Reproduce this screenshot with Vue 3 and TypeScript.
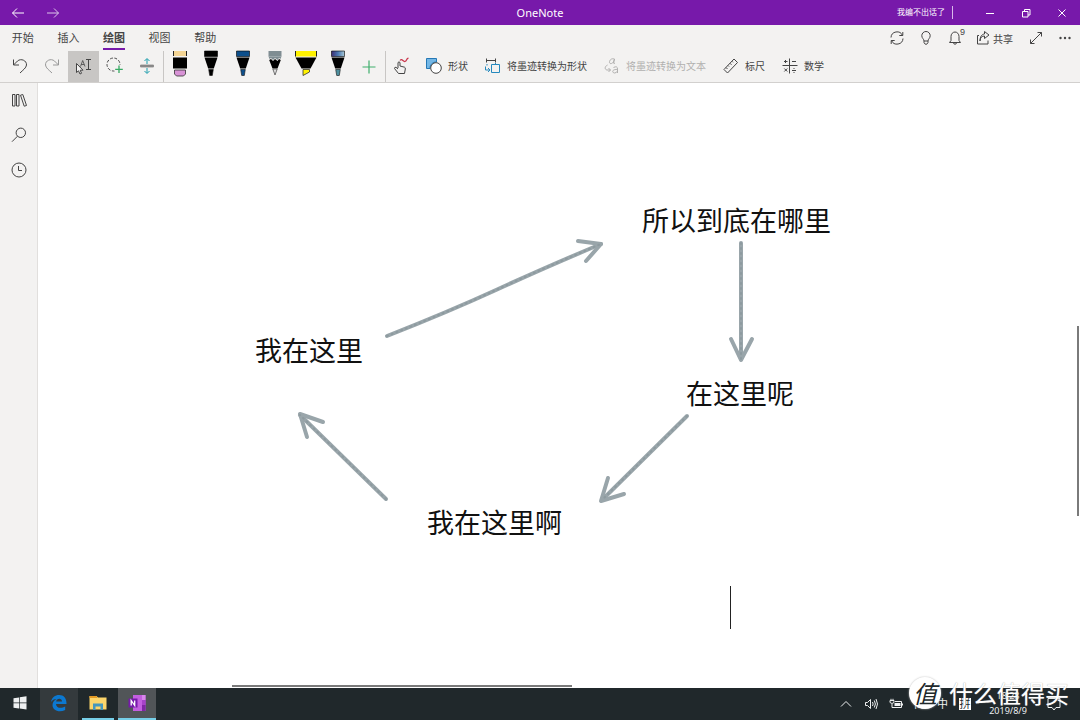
<script setup lang="ts">
interface Pen { name: string; cap: string; kind: 'pen' | 'pencil' | 'marker' | 'eraser'; tip: string }
interface Note { text: string; x: number; y: number }
interface Arrow { shaft: string; head: string }

const tabs: string[] = ['开始', '插入', '绘图', '视图', '帮助']
const activeTab = '绘图'

const pens: Pen[] = [
  { name: '橡皮擦', cap: '#f3d493', kind: 'eraser', tip: '#d893d6' },
  { name: '黑色笔', cap: '#000', kind: 'pen', tip: '#000' },
  { name: '蓝色笔', cap: '#0d4f8b', kind: 'pen', tip: '#0d4f8b' },
  { name: '铅笔', cap: '#7f8d92', kind: 'pencil', tip: '#7f8d92' },
  { name: '荧光笔', cap: '#fff200', kind: 'marker', tip: '#fff200' },
  { name: '星系笔', cap: 'url(#galaxy)', kind: 'pen', tip: '#4d8f9e' },
]

const notes: Note[] = [
  { text: '所以到底在哪里', x: 604, y: 117 },
  { text: '我在这里', x: 217, y: 247 },
  { text: '在这里呢', x: 648, y: 290 },
  { text: '我在这里啊', x: 389, y: 419 },
]

const arrows: Arrow[] = [
  { shaft: 'M349 253 Q410 229 458 207 T563 161', head: 'M540 158 L563 161 L548 178' },
  { shaft: 'M703 160 L703 276', head: 'M693 256 L703 277 L714 256' },
  { shaft: 'M649 333 L564 417', head: 'M570 395 L563 418 L586 411' },
  { shaft: 'M348 416 L262 332', head: 'M285 339 L262 331 L269 354' },
]
</script>

<template>
  <div class="app">
    <header class="titlebar">
      <div class="side">
        <button class="tb" aria-label="后退"><svg width="14" height="12" viewBox="0 0 14 12"><path d="M13 6H1.5M6 1.5L1.5 6L6 10.5" /></svg></button>
        <button class="tb dim" aria-label="前进"><svg width="14" height="12" viewBox="0 0 14 12"><path d="M1 6H12.5M8 1.5L12.5 6L8 10.5" /></svg></button>
      </div>
      <h1>OneNote</h1>
      <div class="side right">
        <span class="user">我编不出话了</span>
        <button class="tb win" aria-label="最小化"><svg width="10" height="10" viewBox="0 0 10 10"><path d="M1 5.5H9" /></svg></button>
        <button class="tb win" aria-label="还原"><svg width="10" height="10" viewBox="0 0 10 10"><path d="M1.5 3.5H7V9H1.5ZM3.5 3.5V1.5H9V7H7" /></svg></button>
        <button class="tb win" aria-label="关闭"><svg width="10" height="10" viewBox="0 0 10 10"><path d="M1.5 1.5L8.5 8.5M8.5 1.5L1.5 8.5" /></svg></button>
      </div>
    </header>

    <section class="ribbon">
      <div class="tabrow">
        <nav class="tabs">
          <button v-for="t in tabs" :key="t" class="tab" :class="{ active: t === activeTab }"><span>{{ t }}</span></button>
        </nav>
        <div class="status">
          <button aria-label="同步"><svg width="16" height="16" viewBox="0 0 16 16"><path d="M2 7.500A6 6 0 0 1 13.500 5.500M14 8.500A6 6 0 0 1 2.500 10.500M13.800 2V5.500H10.300M2.200 14V10.500H5.700" /></svg></button>
          <button aria-label="提示"><svg width="16" height="16" viewBox="0 0 16 16"><path d="M6 11C6 9 3.800 8.300 3.800 5.700A4.200 4.200 0 0 1 12.200 5.700C12.200 8.300 10 9 10 11ZM6 11V12.500L7.200 14.200H8.800L10 12.500V11" /></svg></button>
          <button class="bell" aria-label="通知"><svg width="16" height="16" viewBox="0 0 16 16"><path d="M2.500 12.500H13.500L12 10.500V6.500A4 4.500 0 0 0 4 6.500V10.500ZM6.500 12.700A1.500 1.500 0 0 0 9.500 12.700" /></svg><span class="badge">9</span></button>
          <button class="share"><svg width="14" height="16" viewBox="0 0 14 16"><path d="M3 5.500H1.500V14H12V10.500M4 11C4.200 7.500 6 6 8.500 6V8.500L13 5L8.500 1.500V4C5.500 4.300 4 7 4 11Z" /></svg>共享</button>
          <button aria-label="全屏"><svg width="16" height="16" viewBox="0 0 16 16"><path d="M2.500 13.500L13.500 2.500M9.500 2.500H13.500V6.500M2.500 9.500V13.500H6.500" /></svg></button>
          <button aria-label="更多"><svg width="16" height="16" viewBox="0 0 16 16"><g class="solid"><circle cx="3.500" cy="8" r="1.200" /><circle cx="8" cy="8" r="1.200" /><circle cx="12.500" cy="8" r="1.200" /></g></svg></button>
        </div>
      </div>

      <div class="tools">
        <div class="group edit">
          <button aria-label="撤消"><svg width="18" height="18" viewBox="0 0 18 18"><path d="M2.500 2.500V8H8M2.500 8L6.500 4C10 1 15.800 3.500 15.500 8C15.200 11 12 13 9 16" /></svg></button>
          <button class="faint" aria-label="恢复"><svg width="18" height="18" viewBox="0 0 18 18"><path d="M15.500 2.500V8H10M15.500 8L11.500 4C8 1 2.200 3.500 2.500 8C2.800 11 6 13 9 16" /></svg></button>
          <button class="selected" aria-label="选择对象或键入文本"><svg width="20" height="20" viewBox="0 0 20 20"><path d="M13 2.500H18M15.500 2.500V12.500M13 12.500H18" /><path d="M7.500 9.500L9.700 3.500L12 9.500M8.300 7.500H11.200" stroke-width=".8" /><path d="M3.500 6.500V15.500L5.500 13.800L7 17L8.500 16.300L7.200 13.200H10Z" fill="#f3f2f1" /></svg></button>
          <button aria-label="套索选择"><svg width="20" height="20" viewBox="0 0 20 20"><circle cx="8.500" cy="8.500" r="6.500" stroke-dasharray="2.800 1.600" /><path d="M14 9V17M9.500 13H18" stroke="#f3f2f1" stroke-width="4" /><path d="M14 9.500V17M10.200 13.300H17.800" stroke="#36aa63" stroke-width="1.300" /></svg></button>
          <button aria-label="插入空间"><svg width="18" height="18" viewBox="0 0 18 18"><path d="M2.500 8H15.500V10H2.500Z" fill="#888" stroke="#888" stroke-width=".8" /><path d="M9 7V2M6.500 4L9 1.500L11.500 4M9 11V16M6.500 14L9 16.500L11.500 14" stroke="#1a9dac" /></svg></button>
        </div>
        <div class="group pens">
          <button v-for="p in pens" :key="p.name" :aria-label="p.name">
            <svg width="24" height="28" viewBox="0 0 24 28" class="pen">
              <defs><linearGradient id="galaxy"><stop offset="0" stop-color="#3c2c72" /><stop offset=".5" stop-color="#4a78b3" /><stop offset="1" stop-color="#a7c7d4" /></linearGradient></defs>
              <template v-if="p.kind === 'eraser'">
                <path d="M5.500 1H18.500V6H5.500Z" :fill="p.cap" /><path d="M5.500 1V6M18.500 1V6" stroke="#222" /><path d="M5 7.500H19V18.500H5Z" fill="#000" />
                <path d="M6.500 20H17.500V24L15.500 26H8.500L6.500 24Z" :fill="p.tip" stroke="#333" stroke-width=".8" />
              </template>
              <template v-else-if="p.kind === 'marker'">
                <path d="M1 1H23V6.500H1Z" :fill="p.cap" /><path d="M1.500 1V6.500M22.500 1V6.500" stroke="#222" />
                <path d="M1.500 7.500H22.500L16.500 18.500H7.500Z" fill="#000" /><path d="M9 19.500H15.500V22L9 25.500Z" :fill="p.tip" stroke="#333" stroke-width=".8" />
              </template>
              <template v-else>
                <path d="M5.500 1H18.500V6.500H5.500Z" :fill="p.cap" :stroke="p.kind === 'pencil' ? 'none' : '#000'" stroke-width=".6" />
                <path v-if="p.kind === 'pencil'" d="M5.500 6.500H18.500L17.500 9L16 8L14.500 10L12 8L10 10L8 8L6.500 9Z" :fill="p.cap" />
                <path v-if="p.kind === 'pencil'" d="M6.200 10L8 9L10 11L12 9L14.500 11L16 9L17.800 10L14.500 18.500H9.500Z" fill="#000" />
                <path v-else d="M5.500 7.500H18.500L14.800 18.500H9.200Z" fill="#000" />
                <path v-if="p.kind === 'pencil'" d="M9.800 19L12 25L14.200 19Z" fill="#ddd" stroke="#555" stroke-width=".8" />
                <path v-else d="M9.700 19.500H14.300L13.300 25.500H10.700Z" :fill="p.tip" stroke="#111" stroke-width=".6" />
              </template>
            </svg>
          </button>
          <button aria-label="添加笔"><svg width="16" height="16" viewBox="0 0 16 16"><path d="M8 1.500V14.500M1.500 8H14.500" stroke="#3fae6c" stroke-width="1.200" /></svg></button>
        </div>
        <div class="group commands">
          <button class="touch" aria-label="用鼠标或触摸绘图"><svg width="18" height="18" viewBox="0 0 18 18"><path d="M6 11V5.500Q7 4.200 8 5.500V9L12.500 10.200Q13.500 10.500 13.300 12L12.500 16.500H6.500L2.500 11.500Q2.500 10 4 10.300L6 12" /><path d="M8 3.500C10 1 11 5 13 4.500C15 4 14 1.500 16.500 1.200" stroke="#c9374c" stroke-width="1.200" /></svg></button>
          <button><svg width="18" height="18" viewBox="0 0 18 18"><path d="M1.500 1.500H11.500V5A6 6 0 0 0 5 11.500H1.500Z" fill="#73b7e6" stroke="#2578b5" /><circle cx="11" cy="11" r="5.300" fill="#fff" /></svg><span>形状</span></button>
          <button><svg width="18" height="18" viewBox="0 0 18 18"><path d="M2 3.500H12M2.500 1.500V5.500M11.500 1.500V5.500" /><path d="M3 7V8.500M11.500 6V7" stroke="#2689bd" /><path d="M7.500 7.500H15.500V15.500H7.500Z" stroke="#2689bd" /><path d="M1.500 9.500V13H6M4 11L6 13L4 15" stroke="#2689bd" /></svg><span>将墨迹转换为形状</span></button>
          <button disabled><svg width="18" height="18" viewBox="0 0 18 18"><path d="M11.500 2C8.500 1 6.500 3 6.500 5.200C6.500 7.200 9 7 10.500 5L11.500 2L10.500 6Q10.500 7 12 6" /><path d="M4.500 8C1.500 9.500 1.500 12.500 4 13H7.500M5.500 11L7.500 13L5.500 15M10.500 10.500Q14.500 8.500 14.500 12V16M14.500 12.500C8.500 12 9 16 11.500 16Q13.500 16 14.500 14" /></svg><span>将墨迹转换为文本</span></button>
          <button><svg width="18" height="18" viewBox="0 0 18 18"><path d="M2 12.500L12 2L15.500 5.500L5.500 16ZM4 10.500L5.500 12M6 8.500L7 9.500M8 6.300L9.500 7.800M10 4.300L11 5.300" /></svg><span>标尺</span></button>
          <button><svg width="18" height="18" viewBox="0 0 18 18"><path d="M8.500 1.500V16.500M1.500 8.500H16.500M3 4.500H6.500M4.500 3V6M11 4.500H15M3.300 11.500L6.300 14.500M6.300 11.500L3.300 14.500M11 13.500H15M13 11V12M13 15V16" /></svg><span>数学</span></button>
        </div>
      </div>
    </section>

    <div class="workspace">
      <aside class="rail">
        <button aria-label="显示导航"><svg width="18" height="18" viewBox="0 0 18 18"><path d="M2.500 3.500H5V15H2.500ZM6.500 3.500H9V15H6.500ZM10.500 4.200L12.800 3.500L16.500 14.500L14.200 15.200Z" /></svg></button>
        <button aria-label="搜索"><svg width="18" height="18" viewBox="0 0 18 18"><circle cx="10.800" cy="6.800" r="4.700" /><path d="M7.500 10.200L2 15.700" /></svg></button>
        <button aria-label="最近的笔记"><svg width="18" height="18" viewBox="0 0 18 18"><circle cx="9" cy="9" r="7" /><path d="M8.500 5V9.500H12" /></svg></button>
      </aside>
      <main class="canvas">
        <svg class="ink" width="1042" height="605" viewBox="0 0 1042 605">
          <g v-for="a in arrows" :key="a.shaft"><path :d="a.shaft" /><path :d="a.head" /></g>
          <g class="grain"><path v-for="a in arrows" :key="a.shaft" :d="a.shaft" /></g>
        </svg>
        <p v-for="n in notes" :key="n.text" class="note" :style="{ left: n.x + 'px', top: n.y + 'px' }">{{ n.text }}</p>
        <i class="caret"></i>
        <i class="hscroll"></i>
        <i class="vscroll"></i>
      </main>
    </div>

    <footer class="taskbar">
      <button class="task start" aria-label="开始菜单"><svg width="14" height="14" viewBox="0 0 14 14"><path class="fillw" d="M.5 2.200L6 1.400V6.600H.5ZM6.700 1.300L13.500.3V6.600H6.700ZM.5 7.300H6V12.500L.5 11.700ZM6.700 7.300H13.500V13.600L6.700 12.600Z" /></svg></button>
      <button class="task edge" aria-label="Edge"><svg width="18" height="18" viewBox="0 0 18 18"><path d="M1 8C1.800 3.500 5 1 9.200 1C14 1 16.700 4.500 16.500 10H6C6.300 14.500 11.500 14.700 15.200 12.500V16C9 19 2.500 16.500 2.500 11C2.500 8 4.500 6 6.500 5C4 5 2.300 6.300 1 8ZM6.200 7.400H12C12 3.700 6.500 3.800 6.200 7.400Z" fill="#0c78d0" stroke="none" fill-rule="evenodd" /></svg></button>
      <button class="task open files" aria-label="文件资源管理器"><svg width="18" height="16" viewBox="0 0 18 16"><path d="M.5 1H7.500L9 2.500H17.500V14.500H.5Z" fill="#fbd56b" stroke="none" /><path d="M.5 1H7.500L8.500 3H.5Z" fill="#e39a24" stroke="none" /><path d="M4 15V8.500H14V15H11.500V11.500H6.500V15Z" fill="#4597bd" stroke="none" /></svg></button>
      <button class="task open current" aria-label="OneNote"><svg width="18" height="18" viewBox="0 0 18 18"><path d="M5 1H17.500V17H5Z" fill="#c35fe0" stroke="none" /><path d="M14 1H17.500V6H14Z" fill="#d986ed" stroke="none" /><path d="M14 6H17.500V11H14Z" fill="#a742c9" stroke="none" /><path d="M14 11H17.500V17H14Z" fill="#8026a5" stroke="none" /><path d="M.5 4.500H9.500V13.500H.5Z" fill="#7719aa" stroke="none" /><path d="M3.200 11.500V6.500L6.700 11.500V6.500" stroke="#fff" stroke-width="1.300" /></svg></button>
      <div class="tray">
        <button aria-label="显示隐藏的图标"><svg width="14" height="14" viewBox="0 0 14 14"><path d="M2 9.500L7 4.500L12 9.500" /></svg></button>
        <button aria-label="音量"><svg width="14" height="14" viewBox="0 0 14 14"><path d="M1.500 5.500H3.500L6.500 2.500V11.500L3.500 8.500H1.500ZM8.500 5Q9.800 7 8.500 9M10.300 3.500Q12.500 7 10.300 10.500M12 2Q15 7 12 12" /></svg></button>
        <button aria-label="电池"><svg width="14" height="14" viewBox="0 0 14 14"><path d="M1 3.500H5V5.500Q3 7.500 1 5.500ZM2 1.800V3.500M4 1.800V3.500M3 7V10.500H12.500V4.500H6" /><path class="fillw" d="M5.500 6H11.500V9H5.500ZM12.700 6.500H14V8.500H12.700Z" /></svg></button>
        <span class="ime">简</span>
        <span class="ime">中</span>
        <span class="ime pin">拼</span>
        <time class="clock"><span>18:28</span><span>2019/8/9</span></time>
        <button class="notice" aria-label="操作中心"><svg width="14" height="14" viewBox="0 0 14 14"><path d="M1 1.500H13V10.500H9L7 13L5 10.500H1Z" /></svg></button>
      </div>
      <div class="watermark"><span class="seal">值</span><span>什么值得买</span></div>
    </footer>
  </div>
</template>

<style>
body { margin: 0; }
</style>

<style scoped>
* { box-sizing: border-box; }
.app {
  min-height: 100vh;
  display: flex;
  flex-direction: column;
  background: #fff;
  color: #444;
  font-family: "Liberation Sans", "Noto Sans CJK SC", sans-serif;
  font-size: 10px;
  overflow: hidden;
}
button {
  display: flex;
  align-items: center;
  justify-content: center;
  border: 0;
  padding: 0;
  margin: 0;
  background: none;
  color: inherit;
  font: inherit;
  white-space: nowrap;
}
svg { display: block; flex: none; fill: none; stroke: currentColor; stroke-width: 1; }
.titlebar {
  height: 25px;
  display: grid;
  grid-template-columns: 1fr auto 1fr;
  background: #7719aa;
  color: #fff;
}
.titlebar h1 { margin: 0; font: 11px/25px "Noto Sans", sans-serif; }
.side { display: flex; align-items: center; }
.tb { width: 35px; height: 25px; }
.dim { opacity: .75; }
.right { justify-content: flex-end; }
.user { font-size: 8px; line-height: 13px; padding-right: 7px; margin-right: 19px; border-right: 1px solid #d9b8ea; }
.win { width: 36px; }
.ribbon { background: #f3f2f1; border-bottom: 1px solid #d2d0ce; }
.tabrow { height: 26px; display: flex; justify-content: space-between; }
.tabs { width: 228px; display: grid; grid-template-columns: repeat(5, 1fr); }
.tab { font-size: 11px; }
.tab span { height: 24px; line-height: 24px; }
.tab.active span { font-weight: 700; border-bottom: 2px solid #7719aa; }
.status { display: flex; align-items: center; gap: 13px; padding-right: 7px; }
.bell { position: relative; }
.badge { position: absolute; left: 13px; top: -3px; font-size: 9px; line-height: 10px; }
.share { gap: 3px; margin-right: 2px; }
.solid { fill: currentColor; stroke: none; }
.tools { height: 31px; display: flex; padding-left: 4px; }
.group { display: flex; }
.edit { width: 160px; border-right: 1px solid #c8c6c4; }
.pens { width: 222px; border-right: 1px solid #c8c6c4; }
.edit button, .pens button { flex: 1; }
.edit button:not(.selected), .commands button { padding-bottom: 2px; }
.faint { color: #999; }
.selected { background: #c8c6c4; }
.pen { stroke: none; margin-bottom: 5px; }
.commands { gap: 16px; padding-left: 6px; }
.commands button { gap: 5px; }
.commands .touch { margin-right: -1px; }
.commands button:disabled { color: #b1b0af; }
.workspace { flex: 1; display: flex; }
.rail { width: 38px; display: flex; flex-direction: column; align-items: center; background: #f3f2f1; border-right: 1px solid #e1dfdd; }
.rail button { width: 37px; height: 35px; padding-bottom: 2px; }
.canvas { flex: 1; position: relative; overflow: hidden; }
.ink { position: absolute; left: 0; top: 0; stroke: #99a5aa; stroke-width: 4; stroke-linecap: round; stroke-linejoin: round; }
.grain { stroke: #8d9a9f; stroke-width: 2; stroke-dasharray: 1 4; }
.note { position: absolute; margin: 0; font-size: 27px; line-height: 40px; color: #111; white-space: nowrap; font-family: "Noto Sans CJK SC", sans-serif; }
.caret { position: absolute; left: 692px; top: 503px; width: 1px; height: 43px; background: #222; }
.hscroll { position: absolute; left: 194px; bottom: 1px; width: 340px; height: 2px; background: #7a7a7a; }
.vscroll { position: absolute; right: 1px; top: 243px; width: 2px; height: 190px; background: #7a7a7a; }
.taskbar { position: relative; height: 32px; display: flex; background: #20282b; color: #eef0f1; }
.task { width: 38px; border-bottom: 2px solid transparent; }
.start { width: 40px; }
.edge { background: #343a3d; margin-right: 4px; }
.open { border-bottom-color: #76cfe8; }
.files { width: 32px; margin-right: 4px; }
.current { background: #515558; }
.fillw { fill: currentColor; stroke: none; }
.tray { margin-left: auto; display: flex; align-items: center; padding-right: 19px; }
.tray button { width: 25px; }
.ime { width: 23px; text-align: center; font-size: 11px; line-height: 12px; }
.pin { width: 12px; margin: 0 5px; background: #fff; color: #20282b; }
.clock { width: 52px; margin: 0 6px; display: flex; flex-direction: column; align-items: center; font: 9px/14px "Noto Sans", sans-serif; }
.clock span:last-child { line-height: 16px; }
.tray .notice { width: 14px; margin-left: 7px; }
.watermark {
  position: absolute;
  right: 11px;
  bottom: 11px;
  display: flex;
  align-items: center;
  gap: 8px;
  color: #fff;
  font: 400 24px/30px "Noto Sans CJK SC", sans-serif;
  text-shadow: 0 0 1px #999;
}
.seal { width: 32px; height: 32px; border-radius: 50%; background: #fff; color: #20282b; text-align: center; font-size: 24px; line-height: 31px; font-style: italic; text-shadow: none; box-shadow: 0 0 2px #bbb; }
</style>
